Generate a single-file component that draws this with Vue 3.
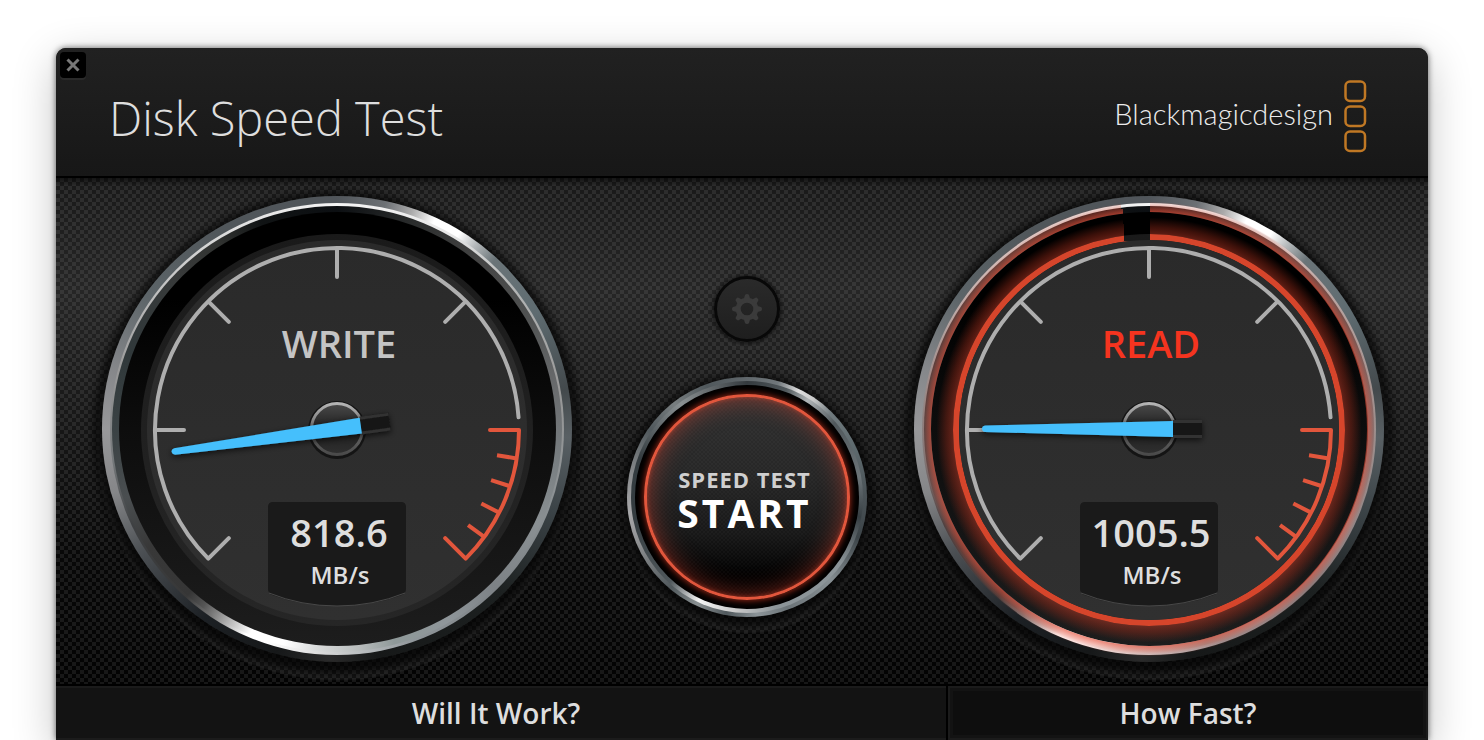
<script setup>
const CX = 250
const CY = 251
const R = 182

const gauges = [
  { id: 'write', label: 'WRITE', value: '818.6', angle: -8, lit: false },
  { id: 'read', label: 'READ', value: '1005.5', angle: 0, lit: true },
]

// Point on the dial; 0 degrees is twelve o'clock, clockwise positive.
function point(deg, r) {
  const a = (deg * Math.PI) / 180
  return [(CX + r * Math.sin(a)).toFixed(2), (CY - r * Math.cos(a)).toFixed(2)]
}
function tick(deg, inner) {
  return `M${point(deg, R).join(' ')}L${point(deg, inner).join(' ')}`
}

const [ax, ay] = point(-135, R)
const [bx, by] = point(86, R)
const scale =
  `M${point(-135, 153).join(' ')}L${ax} ${ay}A${R} ${R} 0 1 1 ${bx} ${by}` +
  [-90, -45, 0, 45].map((d) => tick(d, 153)).join('')
const [rx, ry] = point(90, R)
const [sx, sy] = point(135, R)
const redScale = `M${point(90, 153).join(' ')}L${rx} ${ry}A${R} ${R} 0 0 1 ${sx} ${sy}L${point(135, 153).join(' ')}`
const redTicks = [99, 108, 117, 126].map((d) => tick(d, 162)).join('')
const teeth = [0, 45, 90, 135, 180, 225, 270, 315]
</script>

<template>
  <main class="desktop">
    <section class="window">
      <header class="top">
        <button class="close" type="button" aria-label="Close">
          <svg width="16" height="16" viewBox="0 0 16 16" aria-hidden="true">
            <path d="M2.500 2.500L13.500 13.500M13.500 2.500L2.500 13.500" />
          </svg>
        </button>
        <h1>Disk Speed Test</h1>
        <div class="brand">
          <span>Blackmagicdesign</span>
          <svg width="24" height="74" viewBox="0 0 24 74" aria-hidden="true">
            <rect x="2.500" y="2.500" width="19.500" height="19.500" rx="4.500" />
            <rect x="2.500" y="27.500" width="19.500" height="19.500" rx="4.500" />
            <rect x="2.500" y="52.500" width="19.500" height="19.500" rx="4.500" />
          </svg>
        </div>
      </header>

      <div class="panel">
        <template v-for="g in gauges" :key="g.id">
          <div class="gauge" :class="g.id">
            <div class="ring outer"></div>
            <div class="ring line"></div>
            <div class="ring inner"></div>
            <div class="ring well"></div>
            <svg class="dial" viewBox="0 0 500 500" role="img" :aria-label="g.label + ' ' + g.value + ' MB/s'">
              <defs>
                <linearGradient :id="g.id + '-lip'" x1="0" y1="0" x2="0" y2="1">
                  <stop offset="0" stop-color="#1a1a1a" />
                  <stop offset="1" stop-color="#262626" />
                </linearGradient>
                <linearGradient :id="g.id + '-face'" x1="0" y1="0" x2="0" y2="1">
                  <stop offset="0" stop-color="#2a2a2a" />
                  <stop offset="1" stop-color="#303030" />
                </linearGradient>
                <linearGradient :id="g.id + '-hub'" x1="0" y1="0" x2="0" y2="1">
                  <stop offset="0" stop-color="#b4b4b4" />
                  <stop offset="0.5" stop-color="#6c6c6c" />
                  <stop offset="1" stop-color="#4a4a4a" />
                </linearGradient>
                <linearGradient :id="g.id + '-cap'" x1="0" y1="0" x2="0" y2="1">
                  <stop offset="0" stop-color="#4a4a4a" />
                  <stop offset="0.5" stop-color="#1e1e1e" />
                  <stop offset="1" stop-color="#303030" />
                </linearGradient>
                <radialGradient :id="g.id + '-glow'" gradientUnits="userSpaceOnUse" cx="250" cy="251" r="218">
                  <stop offset="0.895" stop-color="#b43826" stop-opacity="0.55" />
                  <stop offset="0.93" stop-color="#a02c1a" stop-opacity="0.38" />
                  <stop offset="0.975" stop-color="#a02c1a" stop-opacity="0" />
                </radialGradient>
                <radialGradient :id="g.id + '-tint'" gradientUnits="userSpaceOnUse" cx="250" cy="250" r="230">
                  <stop offset="0.945" stop-color="#e6503a" stop-opacity="0.66" />
                  <stop offset="0.965" stop-color="#e6503a" stop-opacity="0.4" />
                  <stop offset="0.99" stop-color="#e6503a" stop-opacity="0" />
                </radialGradient>
                <filter :id="g.id + '-soft'" x="-20%" y="-100%" width="140%" height="300%">
                  <feDropShadow dx="0" dy="2" stdDeviation="3" flood-color="#000" flood-opacity="0.7" />
                </filter>
                <clipPath :id="g.id + '-gap'">
                  <path clip-rule="evenodd" d="M0 0H500V500H0ZM222 20V30H224V45H225V62H251V20Z" />
                </clipPath>
              </defs>

              <circle cx="250" cy="251" r="196" :fill="`url(#${g.id}-lip)`" />
              <g v-if="g.lit" :clip-path="`url(#${g.id}-gap)`">
                <ellipse cx="250" cy="250" rx="223" ry="222" fill="none" stroke-width="10" :stroke="`url(#${g.id}-tint)`" />
                <circle cx="250" cy="251" r="206" fill="none" stroke-width="20" :stroke="`url(#${g.id}-glow)`" />
                <circle cx="250" cy="251" r="193" fill="none" stroke-width="6" stroke="#d6452b" />
              </g>
              <circle cx="250" cy="251" r="190" :fill="`url(#${g.id}-face)`" />

              <path class="scale" :d="scale" />
              <path class="scale red" :d="redScale" />
              <path class="scale red flat" :d="redTicks" />

              <path class="readout" d="M186 323H314Q319 323 319 328V410Q319 414 315 416Q286 427 250 427Q214 427 185 416Q181 414 181 410V328Q181 323 186 323Z" />
              <path class="readout-edge" d="M182 414Q214 427 250 427Q286 427 318 414" />

              <circle cx="250" cy="251" r="29" fill="#141414" />
              <circle cx="250" cy="250" r="25.500" stroke-width="3" :fill="`url(#${g.id}-cap)`" :stroke="`url(#${g.id}-hub)`" />
              <g :filter="`url(#${g.id}-soft)`">
                <g :transform="`rotate(${g.angle} 250 250)`">
                  <path fill="#181818" d="M274 241H303V259H274Z" />
                  <path stroke="#303030" stroke-width="3" d="M274 242.500H303M274 257.500H303" />
                  <path fill="#45bffc" d="M86 246.500L274 242V258L86 253Q83 252 83 249.500Q83 247 86 246.500Z" />
                </g>
              </g>

              <text class="label" x="252" y="179">{{ g.label }}</text>
              <text class="value" x="252" y="368">{{ g.value }}</text>
              <text class="unit" x="253" y="405">MB/s</text>
            </svg>
          </div>

          <div v-if="g.id === 'write'" class="controls">
            <button class="settings" type="button" aria-label="Settings">
              <svg width="32" height="32" viewBox="0 0 32 32" aria-hidden="true">
                <circle cx="16" cy="16" r="8.800" fill="none" stroke="#3b3b3b" stroke-width="5" />
                <path v-for="t in teeth" :key="t" fill="#3b3b3b" d="M12.500 7L14 2Q14.500 1 16 1Q17.500 1 18 2L19.500 7Z" :transform="`rotate(${t} 16 16)`" />
              </svg>
            </button>
            <button class="start" type="button">
              <span class="start-well">
                <span class="start-face">
                  <small>SPEED TEST</small>
                  <strong>START</strong>
                </span>
              </span>
            </button>
          </div>
        </template>
      </div>

      <div class="results">
        <h2 class="work">Will It Work?</h2>
        <h2 class="fast">How Fast?</h2>
      </div>
    </section>
  </main>
</template>

<style>
body {
  margin: 0;
  background: #fff;
}
</style>

<style scoped>
.desktop {
  box-sizing: border-box;
  min-height: 100vh;
  padding: 48px 56px 0;
  display: flex;
  overflow: hidden;
  font-family: "Open Sans", "Noto Sans", sans-serif;
  color: #dedede;
}
.window {
  flex: 1;
  display: flex;
  flex-direction: column;
  background: #111;
  border-radius: 10px 10px 0 0;
  box-shadow: 0 0 6px rgba(0, 0, 0, 0.6), 0 12px 44px rgba(0, 0, 0, 0.24);
}
.top {
  box-sizing: border-box;
  height: 130px;
  padding: 4px 61px 0 4px;
  display: flex;
  align-items: flex-start;
  background: linear-gradient(#212121, #171717);
  border-bottom: 2px solid #000;
  border-radius: 10px 10px 0 0;
}
.close {
  width: 26px;
  height: 26px;
  padding: 0;
  display: grid;
  place-items: center;
  border: 0;
  border-radius: 4px;
  background: #000;
  box-shadow: 0 2px 0 #2a2a2a;
}
.close path {
  stroke: #787878;
  stroke-width: 3;
  fill: none;
}
h1 {
  margin: 32px 0 0 23px;
  font-size: 47px;
  line-height: 68px;
  font-weight: 300;
}
.brand {
  margin: 27px 0 0 auto;
  display: flex;
  align-items: center;
  gap: 10px;
}
.brand span {
  font-family: Lato, sans-serif;
  font-weight: 300;
  font-size: 29px;
  line-height: 40px;
  padding-bottom: 4px;
  color: #ececec;
}
.brand rect {
  fill: none;
  stroke: #c07824;
  stroke-width: 2.5;
}
.panel {
  padding: 1px 29px 5px 31px;
  display: grid;
  grid-template-columns: 500px 1fr 500px;
  background:
    linear-gradient(rgba(0, 0, 0, 0.5), rgba(0, 0, 0, 0) 8px),
    conic-gradient(rgba(255, 255, 255, 0.08) 25%, transparent 0 50%, rgba(255, 255, 255, 0.08) 0 75%, transparent 0) 0 0 / 8px 8px,
    linear-gradient(#191919, #262626 22%, #191919 45%, #080808 75%, #030303);
}
.gauge {
  display: grid;
  place-items: center;
}
.gauge > * {
  grid-area: 1 / 1;
}
.dial {
  width: 500px;
  height: 500px;
  position: relative;
}
.ring {
  border-radius: 50%;
}
.outer {
  width: 470px;
  height: 466px;
  background: conic-gradient(#50555a, #6c7074 12deg, #aaa 19deg, #fff 25deg, #fff 32deg, #b4b8ba 37deg, #6a7478 43deg, #5e6b70 60deg, #43494c 80deg, #596064 92deg, #3c4448 110deg, #1c2020 135deg, #161818 170deg, #2a2a2a 182deg, #161819 195deg, #1c2024 215deg, #4c5054 238deg, #858688 254deg, #98989a 270deg, #85878a 285deg, #5c6468 305deg, #50565a 330deg, #50555a);
  box-shadow:
    0 4px 8px 8px rgba(0, 0, 0, 0.7),
    0 13px 2px 5px rgba(255, 255, 255, 0.07);
}
.line {
  width: 454px;
  height: 452px;
  background: conic-gradient(#f4f4f4, #e8e8e8 30deg, #b4b6b6 50deg, #999 80deg, #8a9093 110deg, #7d8286 135deg, #8f969a 160deg, #e0e0e0 186deg, #fff 198deg, #fff 204deg, #777 214deg, #383838 222deg, #3e4042 245deg, #74787a 262deg, #999 285deg, #c4c4c4 310deg, #e0e0e0 335deg, #f4f4f4);
}
.inner {
  width: 450px;
  height: 446px;
  background: conic-gradient(#0c0f12, #2a2c2c 20deg, #444 40deg, #505252 60deg, #6a6c6e 80deg, #7a8083 100deg, #8a9093 115deg, #7d8286 135deg, #8f969a 150deg, #8f9999 165deg, #b8bcbc 174deg, #dcdede 186deg, #fff 194deg, #fff 203deg, #b8b8b8 209deg, #555 217deg, #363636 222deg, #383838 238deg, #4a4e50 252deg, #3a4244 270deg, #30383a 290deg, #383a3a 315deg, #303230 328deg, #101314 340deg, #0c0f12);
}
.well {
  width: 437px;
  height: 434px;
  background: linear-gradient(#000 20%, #0d0d0d 50%, #1d1d1d);
}
.scale {
  fill: none;
  stroke: #aeaeae;
  stroke-width: 4;
  stroke-linecap: round;
  stroke-linejoin: round;
}
.red {
  stroke: #e2563c;
}
.flat {
  stroke-linecap: butt;
}
.readout {
  fill: #1a1a1a;
}
.readout-edge {
  fill: none;
  stroke: #484848;
  stroke-width: 1;
}
.dial text {
  text-anchor: middle;
  font-weight: 600;
  fill: #dedede;
}
.dial .label {
  font-size: 38px;
  fill: #c4c4c4;
}
.read .dial .label {
  fill: #f5341f;
}
.dial .value {
  font-size: 38px;
}
.dial .unit {
  font-size: 24px;
}
.controls {
  padding: 97px 0 0 7px;
  display: flex;
  flex-direction: column;
  align-items: center;
  gap: 35px;
}
button {
  font-family: inherit;
  cursor: pointer;
}
.settings {
  box-sizing: border-box;
  width: 66px;
  height: 66px;
  padding: 0;
  display: grid;
  place-items: center;
  border: 3px solid #080808;
  border-radius: 50%;
  background: linear-gradient(#2a2a2a, #1e1e1e);
  box-shadow: 0 1px 4px 2px rgba(0, 0, 0, 0.5), 0 8px 2px rgba(255, 255, 255, 0.03);
}
.start {
  box-sizing: border-box;
  width: 240px;
  height: 240px;
  padding: 4px;
  border: 0;
  border-radius: 50%;
  color: #fff;
  background: conic-gradient(#60676b, #70777b 15deg, #ddd 26deg, #ccc 34deg, #707a7e 45deg, #5e6a6e 65deg, #4a5256 90deg, #3c4448 110deg, #868e92 135deg, #6c7478 160deg, #8c9498 175deg, #50585c 190deg, #8a9092 205deg, #50585c 220deg, #8a8c8e 245deg, #a8a8aa 262deg, #8a8c8e 280deg, #50585c 305deg, #787e80 322deg, #50585c 340deg, #60676b);
  box-shadow:
    0 3px 8px 6px rgba(0, 0, 0, 0.7),
    0 12px 2px 4px rgba(255, 255, 255, 0.06);
}
.start-well {
  box-sizing: border-box;
  width: 100%;
  height: 100%;
  padding: 9px;
  display: block;
  border: 4px solid transparent;
  border-radius: 50%;
  background:
    linear-gradient(#000, #000) padding-box,
    conic-gradient(#343a3e, #50585c 20deg, #b0b4b6 32deg, #50585c 50deg, #6c7478 80deg, #363e42 100deg, #8c9498 125deg, #8c9498 165deg, #c8c8c8 185deg, #f4f4f4 205deg, #50585c 222deg, #343c40 260deg, #343c40 290deg, #8a9092 325deg, #343a3e) border-box;
}
.start-face {
  box-sizing: border-box;
  width: 100%;
  height: 100%;
  padding-top: 4px;
  display: flex;
  flex-direction: column;
  align-items: center;
  justify-content: center;
  border: 3px solid #e2563c;
  border-radius: 50%;
  background:
    conic-gradient(rgba(255, 255, 255, 0.025) 25%, transparent 0 50%, rgba(255, 255, 255, 0.025) 0 75%, transparent 0) 0 0 / 4px 4px,
    linear-gradient(#303030, #262626 40%, #181818 68%, #000 90%);
  box-shadow:
    0 0 7px rgba(226, 60, 35, 0.8),
    inset 0 0 4px rgba(226, 70, 45, 0.5),
    inset 0 0 24px rgba(226, 70, 50, 0.55);
}
.start small {
  padding-right: 4px;
  font-size: 22px;
  line-height: 28px;
  font-weight: 700;
  letter-spacing: 1px;
  color: #cfcfcf;
}
.start strong {
  padding-right: 4px;
  font-size: 39px;
  line-height: 40px;
  font-weight: 700;
  letter-spacing: 3px;
}
.results {
  flex: 1;
  display: grid;
  grid-template-columns: 890fr 480fr;
  gap: 2px;
  border-top: 2px solid #000;
  background: #000;
}
h2 {
  box-sizing: border-box;
  margin: 0;
  height: 54px;
  border: 2px solid #1b1b1b;
  font-size: 28px;
  line-height: 50px;
  font-weight: 600;
  text-align: center;
}
.work {
  padding-right: 10px;
  background: #131313;
  border-width: 2px 0;
}
.fast {
  background: #0e0e0e;
  box-shadow: inset 0 0 0 3px #131313;
}
</style>
